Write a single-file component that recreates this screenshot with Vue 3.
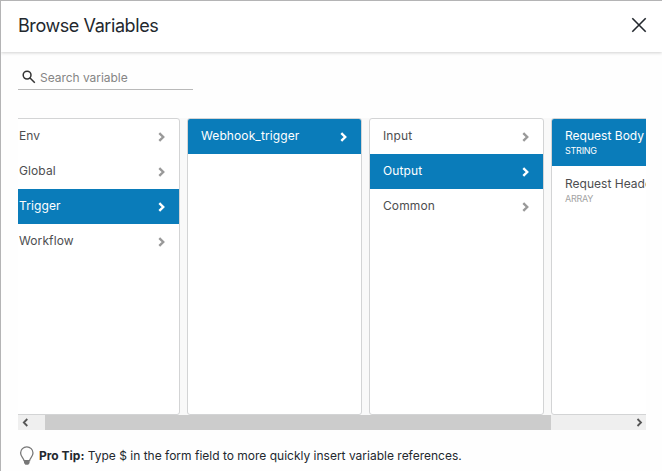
<script setup>
const columns = [
  {
    items: [
      { label: 'Env' },
      { label: 'Global' },
      { label: 'Trigger', selected: true },
      { label: 'Workflow' },
    ],
  },
  { items: [{ label: 'Webhook_trigger', selected: true }] },
  {
    items: [
      { label: 'Input' },
      { label: 'Output', selected: true },
      { label: 'Common' },
    ],
  },
  {
    items: [
      { label: 'Request Body', type: 'STRING', selected: true },
      { label: 'Request Headers', type: 'ARRAY' },
    ],
  },
]
</script>

<template>
  <div class="dialog">
    <header class="header">
      <h1 class="title">Browse Variables</h1>
      <svg class="close" width="16" height="16" viewBox="0 0 16 16">
        <path d="M1.3 1.3L14.7 14.7M14.7 1.3L1.3 14.7" />
      </svg>
    </header>

    <main class="body">
      <label class="search">
        <svg width="14" height="14" viewBox="0 0 14 14">
          <circle cx="5.1" cy="5.1" r="3.9" />
          <path d="M8 8L12.8 12.8" />
        </svg>
        <span>Search variable</span>
      </label>

      <section class="browser">
        <div class="track">
          <div v-for="(col, i) in columns" :key="i" class="column">
            <div
              v-for="item in col.items"
              :key="item.label"
              class="item"
              :class="{ selected: item.selected, typed: item.type }"
            >
              <div class="text">
                <span class="label">{{ item.label }}</span>
                <span v-if="item.type" class="type">{{ item.type }}</span>
              </div>
              <svg v-if="!item.type" class="chevron" width="8" height="10" viewBox="0 0 8 10">
                <path d="M1.3 1.2L5.2 5L1.3 8.8" />
              </svg>
            </div>
          </div>
        </div>
        <div class="scrollbar">
          <div class="arrow left">
            <svg width="7" height="9" viewBox="0 0 7 9"><path d="M5.3 1L1.8 4.5L5.3 8" /></svg>
          </div>
          <div class="thumb"></div>
          <div class="arrow right">
            <svg width="7" height="9" viewBox="0 0 7 9"><path d="M1.5 1L5 4.5L1.5 8" /></svg>
          </div>
        </div>
      </section>

      <footer class="tip">
        <svg width="16" height="20" viewBox="0 0 16 20">
          <path class="bulb" d="M5 14.6C4.8 12 1.6 10.6 1.6 7A6.2 6.2 0 0 1 14 7C14 10.6 10.8 12 10.6 14.6Z" />
          <path class="base" d="M5 15H10.6V17L9.2 18.8H6.4L5 17Z" />
        </svg>
        <p><strong>Pro Tip:</strong><span> Type $ in the form field to more quickly insert variable references.</span></p>
      </footer>
    </main>
  </div>
</template>

<style>
body {
  background: #fff;
  overflow: hidden;
}
</style>

<style scoped>
.dialog {
  box-sizing: border-box;
  height: 471px;
  border-top: 1px solid #b4b4b5;
  border-left: 1px solid #b4b4b5;
  font-family: Inter, 'Liberation Sans', sans-serif;
  color: #23282e;
  background: #fefefe;
  overflow: hidden;
}
.header {
  display: flex;
  align-items: center;
  justify-content: space-between;
  box-sizing: border-box;
  height: 51px;
  padding: 0 15px 3px 17px;
  background: #fff;
  box-shadow: 0 1px 3px rgba(0, 0, 0, 0.18);
}
.title {
  margin: 0;
  padding-top: 2px;
  font-size: 18px;
  font-weight: 400;
  line-height: 24px;
  letter-spacing: -0.42px;
}
.close {
  fill: none;
  stroke: #23282e;
  stroke-width: 1.6;
}
.body {
  padding: 13px 16px 0 17px;
}
.search {
  display: flex;
  align-items: center;
  box-sizing: border-box;
  width: 175px;
  height: 25px;
  padding-left: 4px;
  gap: 4px;
  border-bottom: 1px solid #b9b9b9;
  font-size: 12px;
  letter-spacing: -0.04px;
  color: #858585;
}
.search svg {
  fill: none;
  stroke: #333;
  stroke-width: 1.5;
}
.browser {
  margin-top: 28px;
  overflow: hidden;
}
.track {
  display: flex;
  gap: 7px;
  height: 297px;
  margin-left: -13px;
  background: #f9f9f9;
}
.column {
  box-sizing: border-box;
  flex: 0 0 175px;
  border: 1px solid #d3d4d5;
  border-radius: 3px;
  background: #fff;
  overflow: hidden;
}
.item {
  display: flex;
  justify-content: space-between;
  box-sizing: border-box;
  height: 35px;
  padding: 9px 13px 0 13px;
  font-size: 12px;
  letter-spacing: 0.1px;
  line-height: 16px;
  color: #4d4e50;
}
.item.typed {
  height: 47px;
  margin-bottom: 1px;
  letter-spacing: 0.02px;
}
.item.selected {
  color: #fff;
  background: #0a7cba;
}
.text {
  display: flex;
  flex-direction: column;
}
.label {
  white-space: nowrap;
}
.type {
  margin-top: 1px;
  font-size: 9px;
  line-height: 12px;
  letter-spacing: -0.25px;
  color: #a3a3a3;
}
.selected .type {
  color: #fff;
}
.chevron {
  margin-top: 4px;
  fill: none;
  stroke: #999;
  stroke-width: 2.4;
}
.selected .chevron {
  stroke: #fff;
}
.scrollbar {
  display: flex;
  height: 15px;
  background: #efefef;
}
.arrow {
  display: flex;
  align-items: center;
}
.arrow svg {
  fill: none;
  stroke: #555;
  stroke-width: 1.8;
}
.left {
  width: 23px;
  padding-left: 4px;
}
.thumb {
  width: 506px;
  background: #ccc;
}
.right {
  margin-left: auto;
  padding-right: 3px;
}
.tip {
  display: flex;
  align-items: center;
  gap: 4px;
  height: 20px;
  margin-top: 16px;
  padding-left: 1px;
}
.tip p {
  margin: 0;
  font-size: 12px;
  line-height: 18px;
  white-space: nowrap;
}
.tip .bulb {
  fill: none;
  stroke: #777;
  stroke-width: 1.3;
}
.tip .base {
  fill: #777;
}
</style>
